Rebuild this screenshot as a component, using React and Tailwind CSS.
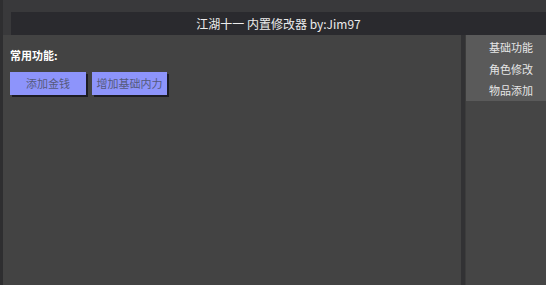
import React from 'react';

const font = { fontFamily: '"Noto Sans CJK SC", "Noto Sans", sans-serif' };

const App = () => {
  const menu = ['基础功能', '角色修改', '物品添加'];

  return (
    <div
      className="w-[546px] h-[285px] bg-[#39393b] border-l-[3px] border-[#2e2e30] flex flex-col overflow-hidden"
      style={font}
    >
      <div className="h-[12px]" />
      <div className="ml-[8px] h-[23px] bg-[#2a2a2e] flex items-center justify-center text-[12px] text-[#ececec]">
        江湖十一 内置修改器 by:Jim97
      </div>

      <div className="flex-1 flex">
        {/* main panel */}
        <div className="flex-1 bg-[#434343] pl-[7px] pt-[13px]">
          <div className="text-[11px] font-bold text-white leading-[14px]">常用功能:</div>
          <div className="flex gap-[6px] mt-[10px]">
            <button className="w-[76px] h-[23px] bg-[#8d94fb] text-[11px] text-[#555a7c] shadow-[2px_2px_0_#1c1c24]">
              添加金钱
            </button>
            <button className="w-[75px] h-[23px] bg-[#8d94fb] text-[11px] text-[#555a7c] shadow-[2px_2px_0_#1c1c24]">
              增加基础内力
            </button>
          </div>
        </div>

        <div className="w-[4px] bg-[#323234]" />
        <div className="w-px bg-[#3c3c3c]" />

        {/* sidebar */}
        <div className="w-[80px] bg-[#454545]">
          <div className="bg-[#5a5a5a] h-[66px] flex flex-col items-center pt-[2px] pl-[10px]">
            {menu.map((m) => (
              <div key={m} className="h-[22px] flex items-center text-[11px] text-[#e6e6e6]">
                {m}
              </div>
            ))}
          </div>
        </div>
      </div>
    </div>
  );
};

export default App;
